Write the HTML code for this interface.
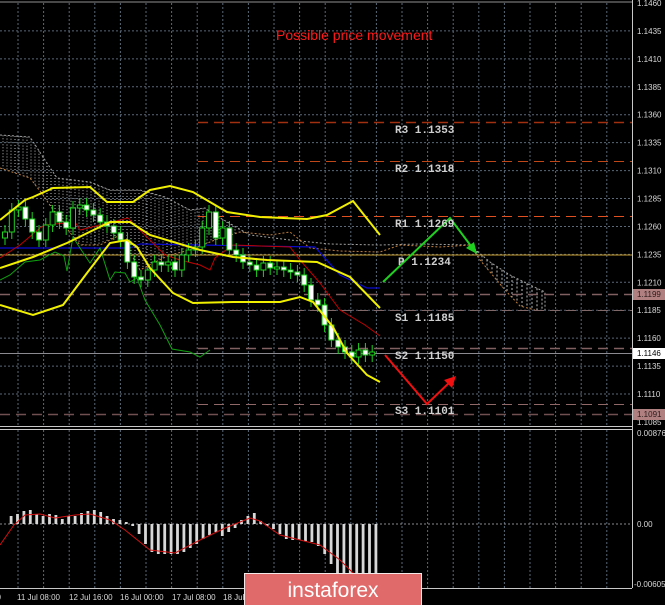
<!DOCTYPE html>
<html><head><meta charset="utf-8"><style>
html,body{margin:0;padding:0;background:#000;width:665px;height:605px;overflow:hidden}
svg{display:block}
text{font-family:"Liberation Sans",sans-serif}
.ax{fill:#d8d8d8;font-size:8px}
.lv{fill:#d0d0d0;font-family:"Liberation Mono",monospace;font-size:11px;font-weight:bold}
</style></head><body>
<svg id="s" width="665" height="605" viewBox="0 0 665 605" xmlns="http://www.w3.org/2000/svg">
<rect width="665" height="605" fill="#000"/>
<g id="grid"></g>
<g id="cloud"></g>
<polyline fill="none" stroke="#a0a0a0" stroke-width="1" stroke-dasharray="2,2" points="0,135 30,137 45,160 57,178 90,182 110,190 140,190 165,197 190,210 205,208 215,215 250,235 290,240 330,244 380,245 420,244 470,245 490,262 510,275 530,285 545,292 545,310"/>
<polyline fill="none" stroke="#c08040" stroke-width="1" stroke-dasharray="2,2" points="0,168 30,178 43,195 60,220 80,245 100,245 120,235 140,270 155,262 170,255 190,250 215,240 240,232 270,235 290,232 310,248 340,251 380,252 400,245 440,247 470,245 480,260 505,290 520,306 535,310"/>
<line x1="198" y1="122.5" x2="632" y2="122.5" stroke="#a03010" stroke-width="1.5" stroke-dasharray="10,6"/>
<line x1="198" y1="161.5" x2="632" y2="161.5" stroke="#c04818" stroke-width="1" stroke-dasharray="10,6"/>
<line x1="198" y1="216.5" x2="632" y2="216.5" stroke="#e05020" stroke-width="1" stroke-dasharray="10,6"/>
<line x1="0" y1="255" x2="632" y2="255" stroke="#c8a030" stroke-width="1"/>
<line x1="0" y1="294.5" x2="632" y2="294.5" stroke="#806060" stroke-width="1.5" stroke-dasharray="10,6"/>
<line x1="198" y1="310.5" x2="632" y2="310.5" stroke="#806868" stroke-width="1" stroke-dasharray="10,6"/>
<line x1="198" y1="348.5" x2="632" y2="348.5" stroke="#806060" stroke-width="1.5" stroke-dasharray="10,6"/>
<line x1="0" y1="353.5" x2="632" y2="353.5" stroke="#8a8a90" stroke-width="1"/>
<line x1="198" y1="404.5" x2="632" y2="404.5" stroke="#906868" stroke-width="1" stroke-dasharray="10,6"/>
<line x1="0" y1="414.5" x2="632" y2="414.5" stroke="#705050" stroke-width="1.5" stroke-dasharray="10,6"/>
<polyline fill="none" stroke="#0a0ad0" stroke-width="1.2" points="0,248 130,248 140,244 200,245 315,247 340,275 367,288 380,288"/>
<polyline fill="none" stroke="#c00000" stroke-width="1" points="0,258 20,245 40,228 45,225 75,222 80,230 100,225 128,218 150,240 165,255 180,260 200,265 210,270 215,258 233,245 290,247 300,260 320,283 340,310 365,325 380,336"/>
<polyline fill="none" stroke="#10a010" stroke-width="1" points="0,280 10,275 25,262 40,260 55,252 64,256 67,271 73,237 78,245 90,263 100,248 110,280 115,272 125,273 130,282 137,278 145,300 160,325 172,349 190,352 200,357 210,350"/>
<g id="candles"></g>
<polyline fill="none" stroke="#f0f000" stroke-width="2" points="0,220 25,200 33,197 53,188 90,187 107,202 133,202 150,190 170,186 193,192 227,212 260,217 307,219 327,215 353,201 380,235"/>
<polyline fill="none" stroke="#f0f000" stroke-width="2" points="0,268 33,257 67,243 110,222 130,222 150,235 200,250 233,257 267,260 317,262 350,277 380,308"/>
<polyline fill="none" stroke="#f0f000" stroke-width="2" points="0,305 33,315 63,305 87,273 110,243 127,240 137,247 150,268 173,293 193,303 233,302 280,302 300,297 313,302 333,327 347,353 367,375 380,382"/>
<polyline fill="none" stroke="#20d020" stroke-width="2" points="383,282 450,218 474,250"/>
<polygon fill="#20d020" points="477,254 466,248 474,242"/>
<polyline fill="none" stroke="#f01010" stroke-width="2" points="385,355 427,404 452,380"/>
<polygon fill="#f01010" points="456,376 444,380 452,388"/>
<text x="276" y="40" fill="#ff1a1a" font-size="14">Possible price movement</text>
<text class="lv" x="395" y="133">R3 1.1353</text>
<text class="lv" x="395" y="172">R2 1.1318</text>
<text class="lv" x="395" y="227">R1 1.1269</text>
<text class="lv" x="398" y="265">P 1.1234</text>
<text class="lv" x="395" y="321">S1 1.1185</text>
<text class="lv" x="395" y="359">S2 1.1150</text>
<text class="lv" x="395" y="414">S3 1.1101</text>
<line x1="0" y1="2" x2="632" y2="2" stroke="#909090"/>
<line x1="632.5" y1="0" x2="632.5" y2="588" stroke="#c8c8c8"/>
<line x1="0" y1="426.5" x2="632" y2="426.5" stroke="#c8c8c8"/>
<line x1="0" y1="429.5" x2="632" y2="429.5" stroke="#c8c8c8"/>
<line x1="0" y1="588.5" x2="632" y2="588.5" stroke="#c8c8c8"/>
<g id="axis"></g>
<rect x="633" y="289" width="32" height="11" fill="#b08080"/>
<text class="ax" x="637" y="297" style="fill:#2a1a1a">1.1199</text>
<rect x="633" y="348" width="32" height="11" fill="#fff"/>
<text class="ax" x="637" y="356" style="fill:#000">1.1146</text>
<rect x="633" y="409" width="32" height="11" fill="#b08080"/>
<text class="ax" x="637" y="417" style="fill:#2a1a1a">1.1091</text>
<text class="ax" x="637" y="436">0.00876</text>
<text class="ax" x="637" y="527">0.00</text>
<text class="ax" x="634" y="587">-0.00605</text>
<line x1="0" y1="524" x2="632" y2="524" stroke="#8a8a90" stroke-dasharray="2,2"/>
<g id="hist"></g>
<polyline fill="none" stroke="#d01010" stroke-width="1" points="0,545 14,525 25,515 40,514 55,518 75,515 90,514 110,520 125,530 150,550 175,553 200,540 225,528 250,518 260,521 280,535 300,540 320,545 340,560 355,575 365,588"/>
<g class="ax">
<text x="-8" y="600">00</text>
<text x="17" y="600">11 Jul 08:00</text>
<text x="69" y="600">12 Jul 16:00</text>
<text x="120" y="600">16 Jul 00:00</text>
<text x="172" y="600">17 Jul 08:00</text>
<text x="223" y="600">18 Jul</text>
</g>
<rect x="244.5" y="573.5" width="177" height="33" fill="#e06a6a" stroke="#f4e8e8" stroke-width="1"/>
<text x="333" y="597" fill="#fff" font-size="21" text-anchor="middle">instaforex</text>
</svg>
<script>
var NS="http://www.w3.org/2000/svg";
function el(p,t,a){var e=document.createElementNS(NS,t);for(var k in a)e.setAttribute(k,a[k]);p.appendChild(e);return e;}
var g=document.getElementById('grid');
for(var i=0;i<15;i++){var y=3+27.93*i;if(i>0)el(g,'line',{x1:0,x2:632,y1:y,y2:y,stroke:'#5a6878','stroke-dasharray':'2,2'});}
for(var x=18;x<632;x+=25.6){el(g,'line',{x1:x,x2:x,y1:3,y2:426,stroke:'#5a6878','stroke-dasharray':'2,2'});el(g,'line',{x1:x,x2:x,y1:430,y2:588,stroke:'#5a6878','stroke-dasharray':'2,2'});}
var ax=document.getElementById('axis');
var labs=['1.1460','1.1435','1.1410','1.1385','1.1360','1.1335','1.1310','1.1285','1.1260','1.1235','1.1210','1.1185','1.1160','1.1135','1.1110','1.1085'];
labs.forEach(function(l,i){var t=el(ax,'text',{x:637,y:3+27.93*i+3,'class':'ax'});t.textContent=l;});
var c=document.getElementById('cloud');
var up=[[0,135],[30,137],[45,160],[57,178],[90,182],[110,190],[140,190],[165,197],[190,210],[205,208],[215,215],[250,235]];
var lo=[[0,168],[30,178],[43,195],[60,220],[80,245],[100,245],[120,235],[140,270],[155,262],[170,255],[190,250],[215,240],[240,232],[250,234]];
function interp(a,x){for(var i=1;i<a.length;i++){if(x<=a[i][0]){var t=(x-a[i-1][0])/(a[i][0]-a[i-1][0]);return a[i-1][1]+t*(a[i][1]-a[i-1][1]);}}return a[a.length-1][1];}
for(var x=3;x<250;x+=4){var y1=interp(up,x),y2=interp(lo,x);if(y2>y1)el(c,'line',{x1:x,x2:x,y1:y1,y2:y2,stroke:'#b8b8b8','stroke-dasharray':'1,2'});}
var up2=[[470,245],[490,262],[510,275],[530,285],[545,292]],lo2=[[470,245],[480,260],[505,290],[520,306],[535,310]];
for(var x=472;x<545;x+=5){var y1=interp(up2,x),y2=interp(lo2,x);if(y2>y1+2)el(c,'line',{x1:x,x2:x,y1:y1,y2:y2,stroke:'#b8b8b8','stroke-dasharray':'2,2'});}
var cl=[232,210,207,219,232,240,225,212,222,228,208,205,210,215,222,226,233,240,262,277,280,270,262,265,262,270,255,250,247,228,212,238,228,250,255,262,265,270,263,268,267,270,272,275,285,300,305,325,340,347,352,357,350,355,352];
var cg=document.getElementById('candles');var prev=238;
cl.forEach(function(v,i){var x=5+i*6.8;var o=prev,cc=v;var top=Math.min(o,cc),bot=Math.max(o,cc);
el(cg,'line',{x1:x,x2:x,y1:top-7,y2:bot+7,stroke:'#20d020'});
el(cg,'rect',{x:x-2.5,y:top,width:5,height:Math.max(2,bot-top),fill:cc<o?'#000':'#fff',stroke:'#20d020','stroke-width':1});prev=v;});
var hv=[8,10,13,14,10,8,10,9,5,8,8,11,13,14,12,8,5,4,2,-2,-10,-20,-28,-30,-30,-30,-30,-28,-24,-20,-15,-11,-8,-12,-8,-4,4,8,11,3,-2,-5,-10,-15,-16,-16,-17,-18,-22,-30,-40,-50,-55,-55,-55,-55,-55,-55];
var hg=document.getElementById('hist');
hv.forEach(function(v,i){var x=11+i*6.4;el(hg,'rect',{x:x-1.3,y:v>0?524-v:524,width:2.8,height:Math.abs(v),fill:'#d8d8d8'});});
</script>
</body></html>
